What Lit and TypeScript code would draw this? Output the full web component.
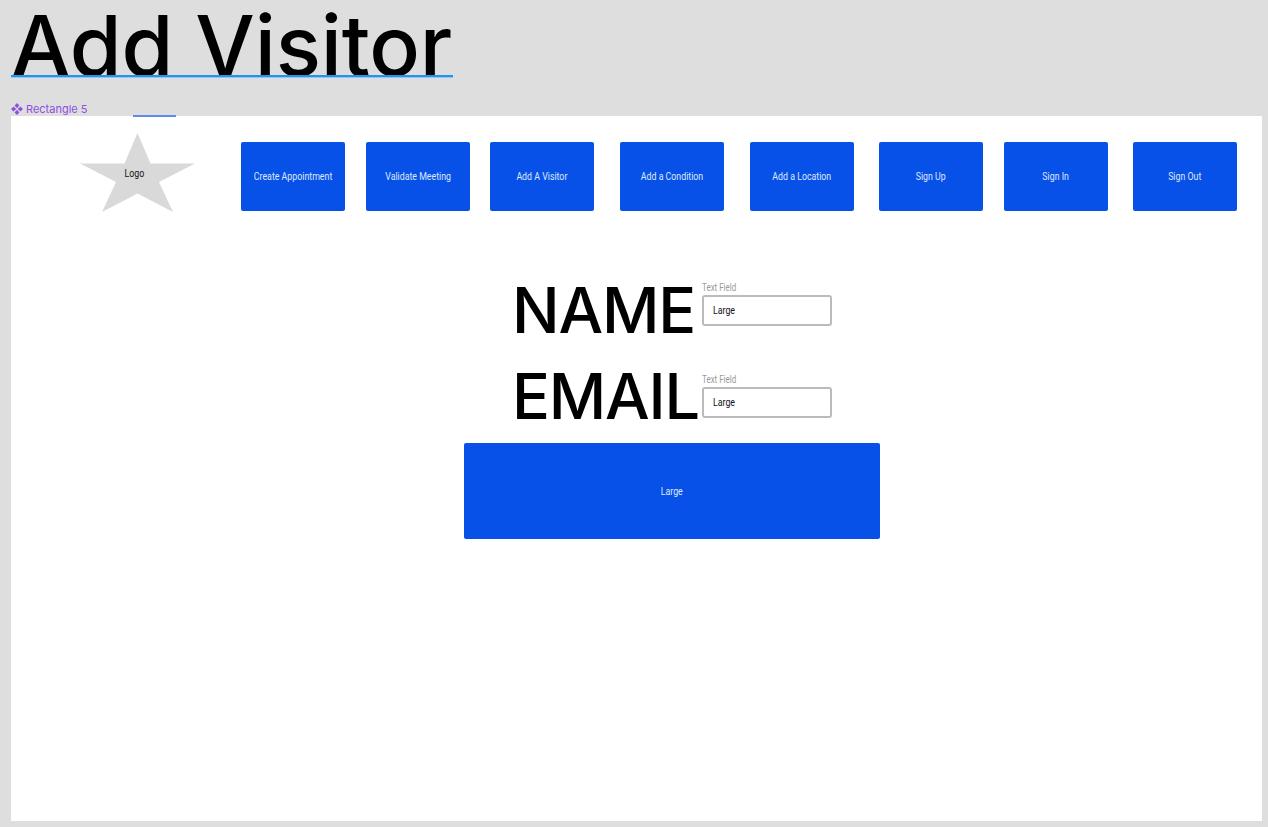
import { LitElement, html, css } from "lit";
import { customElement } from "lit/decorators.js";

const NAV = [
	{ label: "Create Appointment", gap: 0 },
	{ label: "Validate Meeting", gap: 21 },
	{ label: "Add A Visitor", gap: 20 },
	{ label: "Add a Condition", gap: 26 },
	{ label: "Add a Location", gap: 26 },
	{ label: "Sign Up", gap: 25 },
	{ label: "Sign In", gap: 21 },
	{ label: "Sign Out", gap: 25 },
];

@customElement("app-root")
export class AppRoot extends LitElement {
	static override styles = css`
		:host {
			background: #dedede;
			display: block;
			height: 827px;
			overflow: hidden;
			padding: 0 6px 0 11px;
			box-sizing: border-box;
			font-family: Roboto, "Liberation Sans", sans-serif;
		}

		/* the reference's labels are in a condensed face, none is installed */
		.narrow {
			display: inline-block;
			transform: scaleX(0.8);
			white-space: nowrap;
		}

		.left { transform-origin: left center; }

		h1 {
			color: #000;
			font-family: Inter, sans-serif;
			font-size: 84px;
			font-weight: 500;
			height: 77px;
			letter-spacing: -0.2px;
			line-height: 92px;
			margin: 0;
			position: relative;
			white-space: nowrap;
			width: 442px;
		}

		/* selection underline sits on top of the glyphs */
		h1::after {
			background: #1e96f0;
			bottom: 0;
			box-shadow: 0 1px 0 rgba(30, 150, 240, 0.35);
			content: "";
			height: 2px;
			left: 0;
			position: absolute;
			right: 0;
		}

		.tag {
			align-items: center;
			color: #8f4fe0;
			display: flex;
			font-family: Inter, sans-serif;
			font-size: 11px;
			gap: 3px;
			height: 15px;
			margin-top: 24px;
		}

		.tag svg { display: block; }

		.canvas {
			background: #fff;
			height: 705px;
			position: relative;
		}

		.marker {
			background: #5b8de8;
			height: 2px;
			left: 122px;
			position: absolute;
			top: -1px;
			width: 43px;
		}

		.top {
			align-items: flex-start;
			display: flex;
			padding: 17px 0 0 69px;
		}

		.logo {
			height: 80px;
			position: relative;
			width: 115px;
			margin-right: 46px;
		}

		.logo svg { display: block; }

		.logo span {
			color: #111;
			font-size: 11px;
			left: 42px;
			position: absolute;
			top: 34px;
		}

		nav {
			display: flex;
			margin-top: 9px;
		}

		.btn {
			align-items: center;
			background: #0751e8;
			border-radius: 2px;
			color: #dfe9ff;
			display: flex;
			font-size: 11px;
			height: 69px;
			justify-content: center;
			width: 104px;
		}

		form {
			display: grid;
			grid-template-columns: 189px 130px;
			justify-content: start;
			margin: 0;
			padding: 54px 0 0 502px;
		}

		.row {
			display: contents;
		}

		.big {
			color: #000;
			font-family: Inter, sans-serif;
			font-size: 63px;
			font-weight: 500;
			height: 92px;
			letter-spacing: -1.2px;
			line-height: 86px;
			margin-left: -1px;
			white-space: nowrap;
		}

		.big.second { margin-top: -6px; }

		.field {
			display: flex;
			flex-direction: column;
			color: #9a9a9a;
			font-size: 10px;
			gap: 1px;
			padding-top: 15px;
		}

		.field label { line-height: 12px; height: 12px; }

		.input {
			align-items: center;
			border: 2px solid #bbb;
			border-radius: 3px;
			box-sizing: border-box;
			color: #111;
			display: flex;
			font-size: 11px;
			height: 31px;
			padding-left: 9px;
		}

		.submit {
			align-items: center;
			background: #0751e8;
			border-radius: 2px;
			color: #dfe9ff;
			display: flex;
			font-size: 11px;
			height: 96px;
			justify-content: center;
			margin: -2px 0 0 453px;
			width: 416px;
		}
	`;

	override render() {
		return html`
			<h1>Add Visitor</h1>
			<div class="tag">
				<svg width="12" height="12" viewBox="0 0 12 12" fill="#8f4fe0">
					<path d="M6 0 8.4 2.6 6 5.2 3.6 2.6Z" />
					<path d="M6 6.8 8.4 9.4 6 12 3.6 9.4Z" />
					<path d="M2.6 3.6 5.2 6 2.6 8.4 0 6Z" />
					<path d="M9.4 3.6 12 6 9.4 8.4 6.8 6Z" />
				</svg>
				Rectangle 5
			</div>
			<div class="canvas">
				<div class="marker"></div>
				<div class="top">
					<div class="logo">
						<svg width="115" height="80" viewBox="0 0 115 80">
							<path fill="#d9d9d9" d="M57.5 0 70.5 30.5 115 30.5 79 49 93 79 57.5 60.5 22 79 36 49 0 30.5 44.5 30.5Z" />
						</svg>
						<span class="narrow">Logo</span>
					</div>
					<nav>
						${NAV.map(
							(item) => html`<div class="btn" style="margin-left:${item.gap}px"><span class="narrow">${item.label}</span></div>`
						)}
					</nav>
				</div>
				<form>
					<div class="row">
						<div class="big">NAME</div>
						<div class="field"><label><span class="narrow left">Text Field</span></label><div class="input"><span class="narrow left">Large</span></div></div>
					</div>
					<div class="row">
						<div class="big second">EMAIL</div>
						<div class="field"><label><span class="narrow left">Text Field</span></label><div class="input"><span class="narrow left">Large</span></div></div>
					</div>
				</form>
				<div class="submit"><span class="narrow">Large</span></div>
			</div>
		`;
	}
}
